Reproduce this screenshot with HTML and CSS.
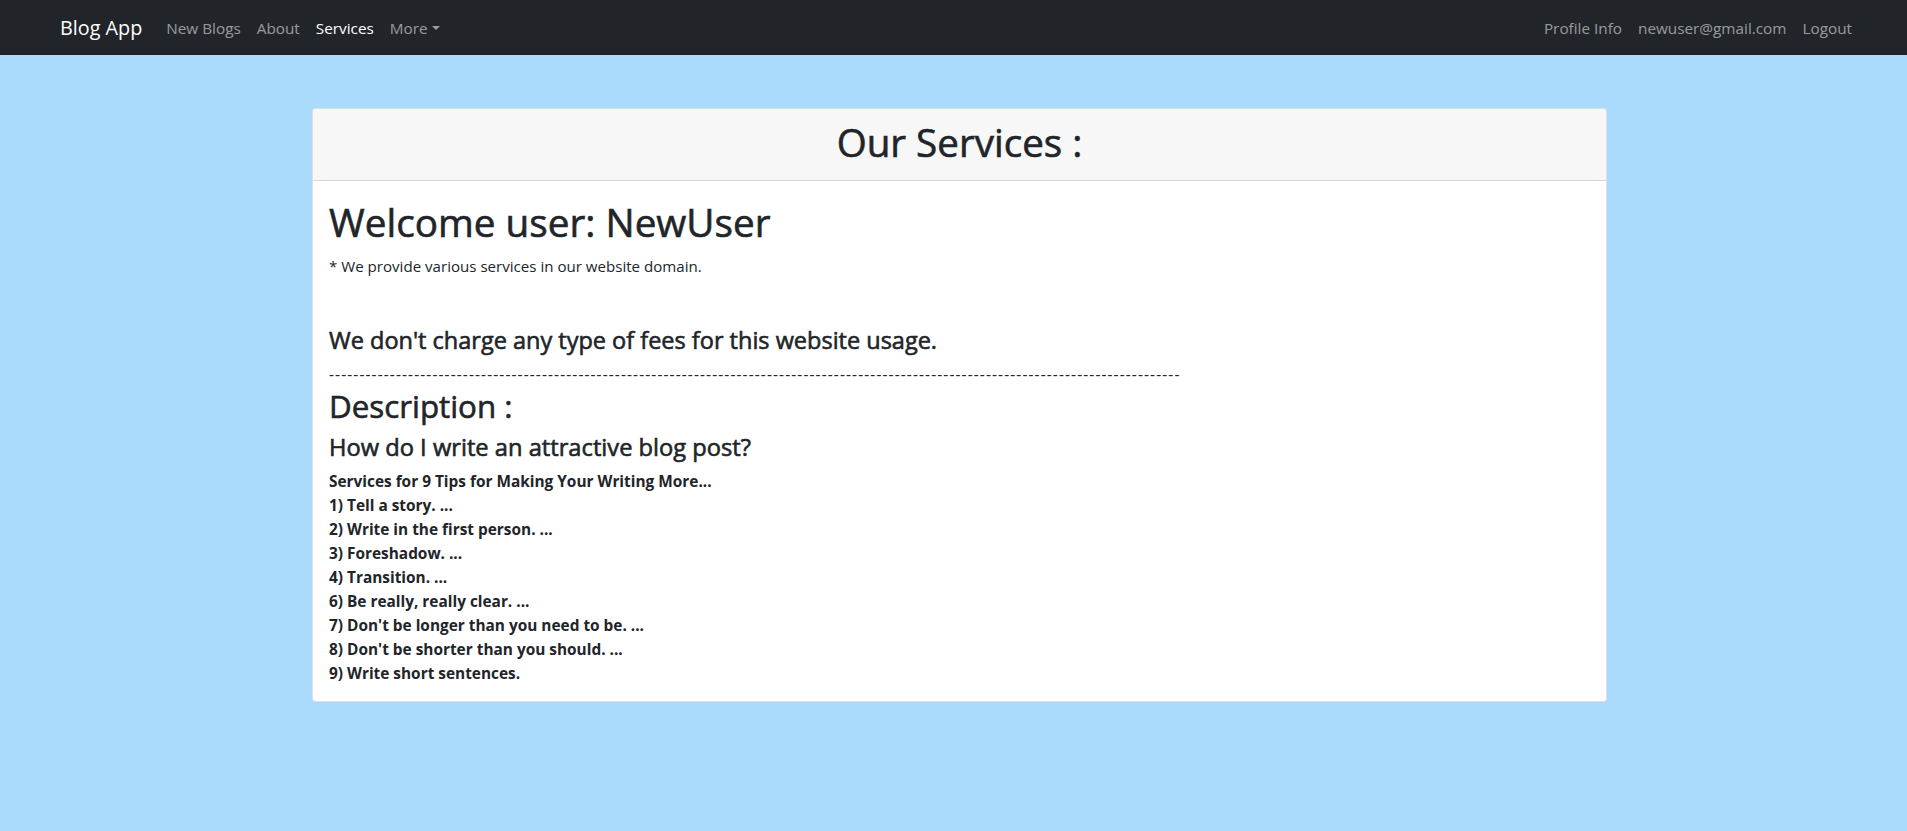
FILE: index.html
```html
<!DOCTYPE html>
<html lang="en">
<head>
<meta charset="utf-8">
<title>Blog App - Services</title>
<link rel="stylesheet" href="styles.css">
</head>
<body>
<nav class="navbar">
  <div class="nav-left">
    <a class="brand" href="#">Blog App</a>
    <a class="nav-link" href="#">New Blogs</a>
    <a class="nav-link" href="#">About</a>
    <a class="nav-link active" href="#">Services</a>
    <a class="nav-link dropdown-toggle" href="#">More</a>
  </div>
  <div class="nav-right">
    <a class="nav-link" href="#">Profile Info</a>
    <a class="nav-link" href="#">newuser@gmail.com</a>
    <a class="nav-link" href="#">Logout</a>
  </div>
</nav>
<main class="page">
  <section class="card">
    <header class="card-header">
      <h2 class="card-title">Our Services :</h2>
    </header>
    <div class="card-body">
      <h1 class="welcome">Welcome user: NewUser</h1>
      <p class="lead-note">* We provide various services in our website domain.</p>
      <h4 class="fees">We don't charge any type of fees for this website usage.</h4>
      <div class="dashes">--------------------------------------------------------------------------------------------------------------------------------------------</div>
      <h2 class="desc">Description :</h2>
      <h4 class="question">How do I write an attractive blog post?</h4>
      <div class="tips">
        <div>Services for 9 Tips for Making Your Writing More...</div>
        <div>1) Tell a story. ...</div>
        <div>2) Write in the first person. ...</div>
        <div>3) Foreshadow. ...</div>
        <div>4) Transition. ...</div>
        <div>6) Be really, really clear. ...</div>
        <div>7) Don't be longer than you need to be. ...</div>
        <div>8) Don't be shorter than you should. ...</div>
        <div>9) Write short sentences.</div>
      </div>
    </div>
  </section>
</main>
</body>
</html>
```
FILE: styles.css
```css
* { box-sizing: border-box; }

html, body {
  margin: 0;
  padding: 0;
}

body {
  background: #aadbfc;
  color: #212529;
  font-family: "Open Sans", "Noto Sans", "Liberation Sans", sans-serif;
  font-size: 15.1px;
  line-height: 24px;
  min-height: 831px;
}

a { text-decoration: none; }

.navbar {
  height: 55px;
  background: #212529;
  display: flex;
  align-items: center;
  justify-content: space-between;
  padding: 0 47px 0 60px;
}

.nav-left, .nav-right {
  display: flex;
  align-items: center;
}

.brand {
  color: #ffffff;
  font-size: 19.8px;
  line-height: 30px;
  margin-right: 16px;
}

.nav-link {
  color: rgba(255, 255, 255, 0.55);
  font-size: 15.3px;
  line-height: 24px;
  padding: 8px 8px;
}

.nav-link.active { color: #ffffff; }

.dropdown-toggle::after {
  content: "";
  display: inline-block;
  margin-left: 4px;
  vertical-align: 4px;
  border-top: 4.6px solid;
  border-left: 4.6px solid transparent;
  border-right: 4.6px solid transparent;
  border-bottom: 0;
}

.page {
  padding: 53px 0 0 312px;
}

.card {
  width: 1295px;
  background: #ffffff;
  border: 1px solid rgba(0, 0, 0, 0.125);
  border-radius: 4px;
  overflow: hidden;
}

.card-header {
  background: #f7f7f7;
  border-bottom: 1px solid rgba(0, 0, 0, 0.125);
  height: 72px;
  display: flex;
  align-items: center;
  justify-content: center;
  padding: 0 16px 6px;
}

.card-title {
  margin: 0;
  font-size: 38.6px;
  line-height: 42px;
  font-weight: 500;
  -webkit-text-stroke: 0.6px currentColor;
}

.card-body {
  padding: 17px 16px 15px;
}

h1, h2, h4 {
  margin: 0 0 8px 0;
  font-weight: 500;
  -webkit-text-stroke: 0.6px currentColor;
}

.welcome {
  font-size: 38.7px;
  line-height: 48px;
}

.lead-note {
  margin: 0 0 48px 0;
  line-height: 24px;
}

.fees {
  font-size: 23.5px;
  line-height: 28.8px;
}

.question {
  font-size: 23.7px;
  line-height: 28.8px;
}

.dashes {
  font-size: 15.4px;
  line-height: 24px;
  letter-spacing: 1.13px;
  white-space: nowrap;
  overflow: hidden;
}

.desc {
  font-size: 31.3px;
  line-height: 38.4px;
}

.tips {
  font-weight: 700;
  font-size: 15.4px;
  line-height: 24px;
}
```
